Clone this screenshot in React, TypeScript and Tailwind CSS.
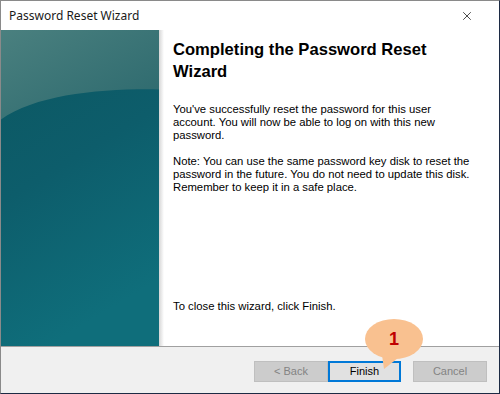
import { X } from 'lucide-react'

function SidePanel() {
  return (
    <svg className="h-full w-full" viewBox="0 0 158 314" preserveAspectRatio="none">
      <defs>
        <linearGradient id="base" x1="0" y1="0" x2="0.3" y2="1">
          <stop offset="0" stopColor="#0c5761" />
          <stop offset="0.5" stopColor="#0d5d6b" />
          <stop offset="1" stopColor="#0f6e7b" />
        </linearGradient>
        <linearGradient id="gloss" x1="0" y1="0" x2="1" y2="1">
          <stop offset="0" stopColor="#4a807f" />
          <stop offset="1" stopColor="#2b686d" />
        </linearGradient>
      </defs>
      <rect width="158" height="314" fill="url(#base)" />
      <path d="M0 0 H158 V59 C100 58 35 64 0 89 Z" fill="url(#gloss)" />
    </svg>
  )
}

function Button({ label, focused }: { label: string; focused?: boolean }) {
  return (
    <div
      className={
        focused
          ? 'flex h-[21px] w-[73px] items-center justify-center border-2 border-[#0078d7] bg-[#e1e1e1] text-[11px] text-black'
          : 'flex h-[21px] w-[74px] items-center justify-center border border-[#bfbfbf] bg-[#cccccc] text-[11px] text-[#838383]'
      }
    >
      {label}
    </div>
  )
}

export default function App() {
  return (
    <div className="relative flex h-[394px] w-[500px] flex-col overflow-hidden border border-[#8a8a8a] border-b-[#1c2a44] border-r-[#1c2a44] bg-white font-['Liberation_Sans',Arial,sans-serif]">
      {/* Title bar */}
      <div className="flex h-[29px] shrink-0 items-center justify-between pl-[8px] pr-[25px]">
        <span className="font-['Noto_Sans',sans-serif] text-[12px] text-[#1a1a1a]">Password Reset Wizard</span>
        <X className="h-[14px] w-[14px] text-black" strokeWidth={1.2} />
      </div>

      {/* Body */}
      <div className="flex min-h-0 flex-1">
        <div className="w-[158px] shrink-0">
          <SidePanel />
        </div>
        <div className="w-[5px] shrink-0 bg-gradient-to-r from-[#d6d6d6] to-white" />
        <div className="flex w-[320px] flex-col whitespace-nowrap pl-[9px] pt-[9px] pb-[33px] text-[11.3px] leading-[13px] text-black">
          <h1 className="text-[16.6px] font-bold leading-[22px]">
            Completing the Password Reset
            <br />
            Wizard
          </h1>
          <p className="mt-[20px]">
            You&apos;ve successfully reset the password for this user
            <br />
            account. You will now be able to log on with this new
            <br />
            password.
          </p>
          <p className="mt-[13px]">
            Note: You can use the same password key disk to reset the
            <br />
            password in the future. You do not need to update this disk.
            <br />
            Remember to keep it in a safe place.
          </p>
          <p className="mt-auto">To close this wizard, click Finish.</p>
        </div>
      </div>

      {/* Footer */}
      <div className="flex h-[47px] shrink-0 items-start justify-end border-t border-[#a0a0a0] bg-[#f0f0f0] pt-[14px] pr-[12px]">
        <Button label="< Back" />
        <Button label="Finish" focused />
        <div className="w-[12px]" />
        <Button label="Cancel" />
      </div>

      {/* Callout */}
      <div className="absolute left-[361px] top-[316px] h-[56px] w-[64px]">
        <svg width="64" height="56" viewBox="0 0 64 56">
          <path d="M20 38 L22 52 L36 41 Z" fill="#f9c190" />
          <ellipse cx="32" cy="22" rx="29" ry="20" fill="#f9c190" />
        </svg>
        <span className="absolute left-0 top-[13px] w-[64px] text-center text-[18px] font-bold leading-[18px] text-[#c00000]">1</span>
      </div>
    </div>
  )
}
